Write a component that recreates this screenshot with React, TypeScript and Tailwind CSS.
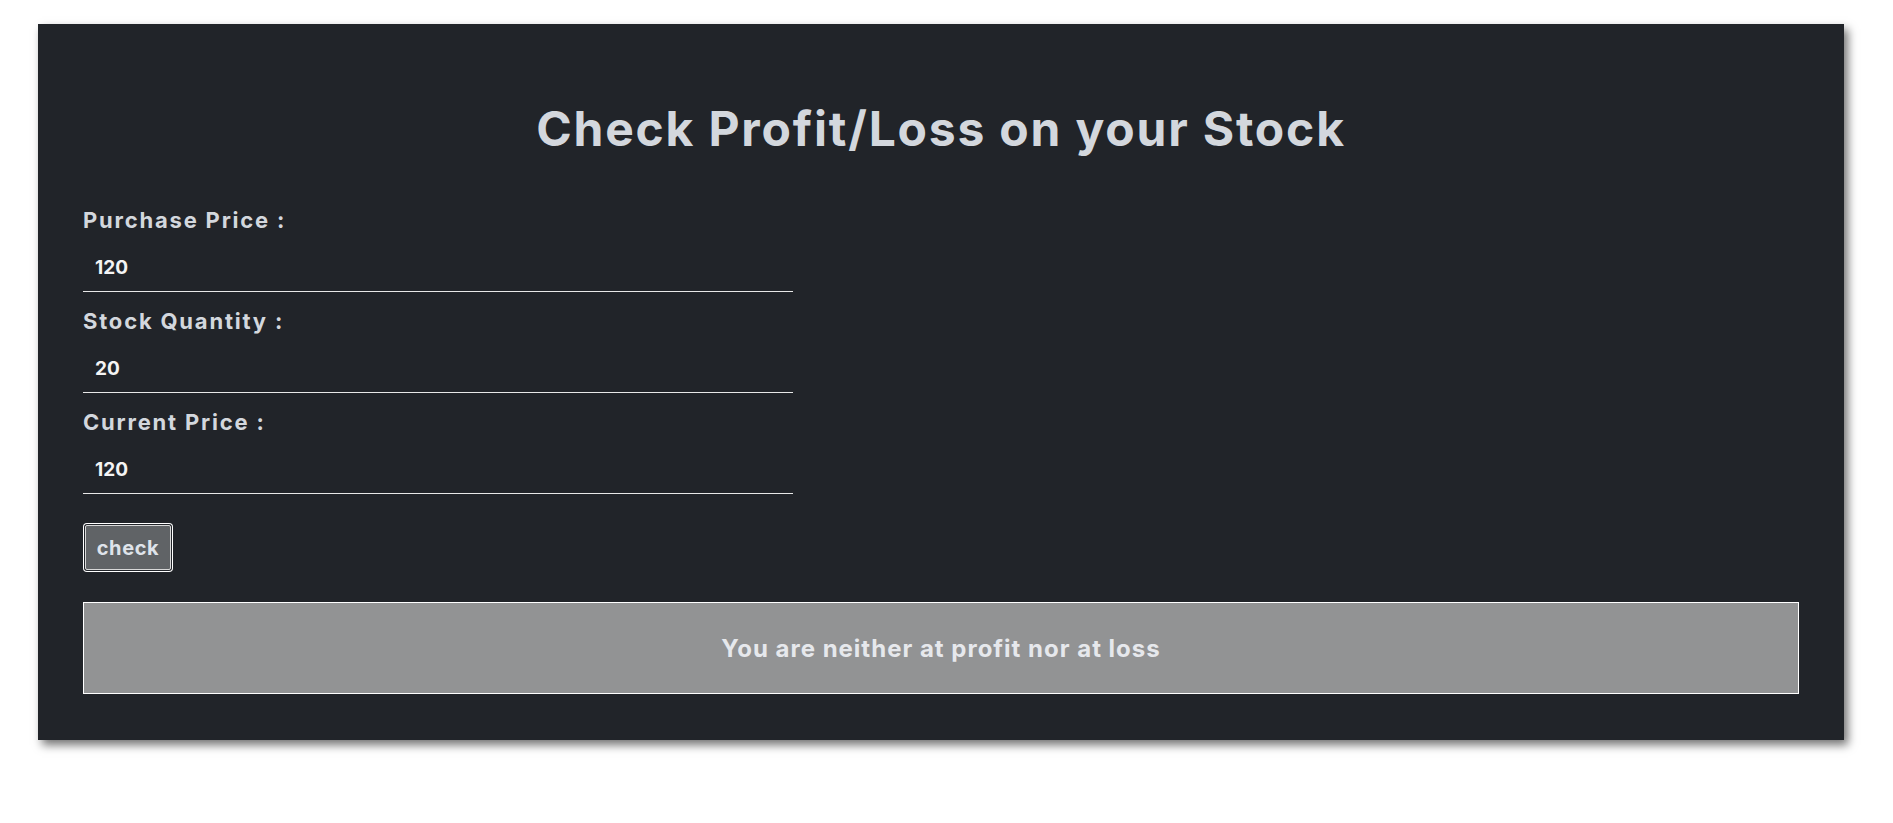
import React, { useState } from 'react'

const font = { fontFamily: 'Inter, "Noto Sans", sans-serif' }

interface FieldProps {
  label: string;
  value: string;
  onChange: (v: string) => void;
}

function Field({ label, value, onChange }: FieldProps) {
  return (
    <div className="flex flex-col">
      <label className="text-[22px] leading-[26px] font-bold tracking-[1.8px] text-[#d3d7dd]">{label}</label>
      <input
        type="number"
        value={value}
        onChange={(e) => onChange(e.target.value)}
        className="mt-[10px] h-[49px] w-[710px] bg-transparent border-b border-[#e8e8e8] px-[12px] text-[19px] font-bold text-[#f4f4f4] outline-none [appearance:textfield]"
        style={font}
      />
    </div>
  )
}

function App() {
  const [purchase, setPurchase] = useState("120");
  const [quantity, setQuantity] = useState("20");
  const [current, setCurrent] = useState("120");
  const [message, setMessage] = useState("You are neither at profit nor at loss");

  function check() {
    const p = Number(purchase);
    const q = Number(quantity);
    const c = Number(current);
    if (c > p) {
      const profit = (c - p) * q;
      setMessage(`You gained ${((c - p) / p * 100).toFixed(2)}%. Your total profit is ₹${profit}`);
    } else if (c < p) {
      const loss = (p - c) * q;
      setMessage(`You lost ${((p - c) / p * 100).toFixed(2)}%. Your total loss is ₹${loss}`);
    } else {
      setMessage("You are neither at profit nor at loss");
    }
  }

  return (
    <div className="min-h-[823px] bg-white pt-[24px] pl-[38px] pr-[49px]" style={font}>
      <div className="bg-[#212429] shadow-[4px_5px_9px_rgba(0,0,0,0.55)] px-[45px] pt-[76px] pb-[46px]">
        <h1 className="text-center text-[48px] leading-[58px] font-bold tracking-[1.8px] text-[#d3d7dd]">
          Check Profit/Loss on your Stock
        </h1>

        {/* inputs */}
        <div className="mt-[49px] flex flex-col gap-[16px]">
          <Field label="Purchase Price :" value={purchase} onChange={setPurchase} />
          <Field label="Stock Quantity :" value={quantity} onChange={setQuantity} />
          <Field label="Current Price :" value={current} onChange={setCurrent} />
        </div>

        <button
          onClick={check}
          className="mt-[31px] ml-[2px] w-[86px] h-[45px] flex items-center justify-center bg-[#606366] border border-[#d8d8d8] rounded-[2px] ring-1 ring-white ring-offset-1 ring-offset-[#212429] text-[20px] font-bold tracking-[0.6px] text-[#dfe3ea]"
        >
          check
        </button>

        <div className="mt-[32px] h-[92px] flex items-center justify-center bg-[#929394] border border-white text-[24px] leading-[30px] pt-[2px] font-bold tracking-[1px] text-[#e6e8ec]">
          {message}
        </div>
      </div>
    </div>
  )
}

export default App;
